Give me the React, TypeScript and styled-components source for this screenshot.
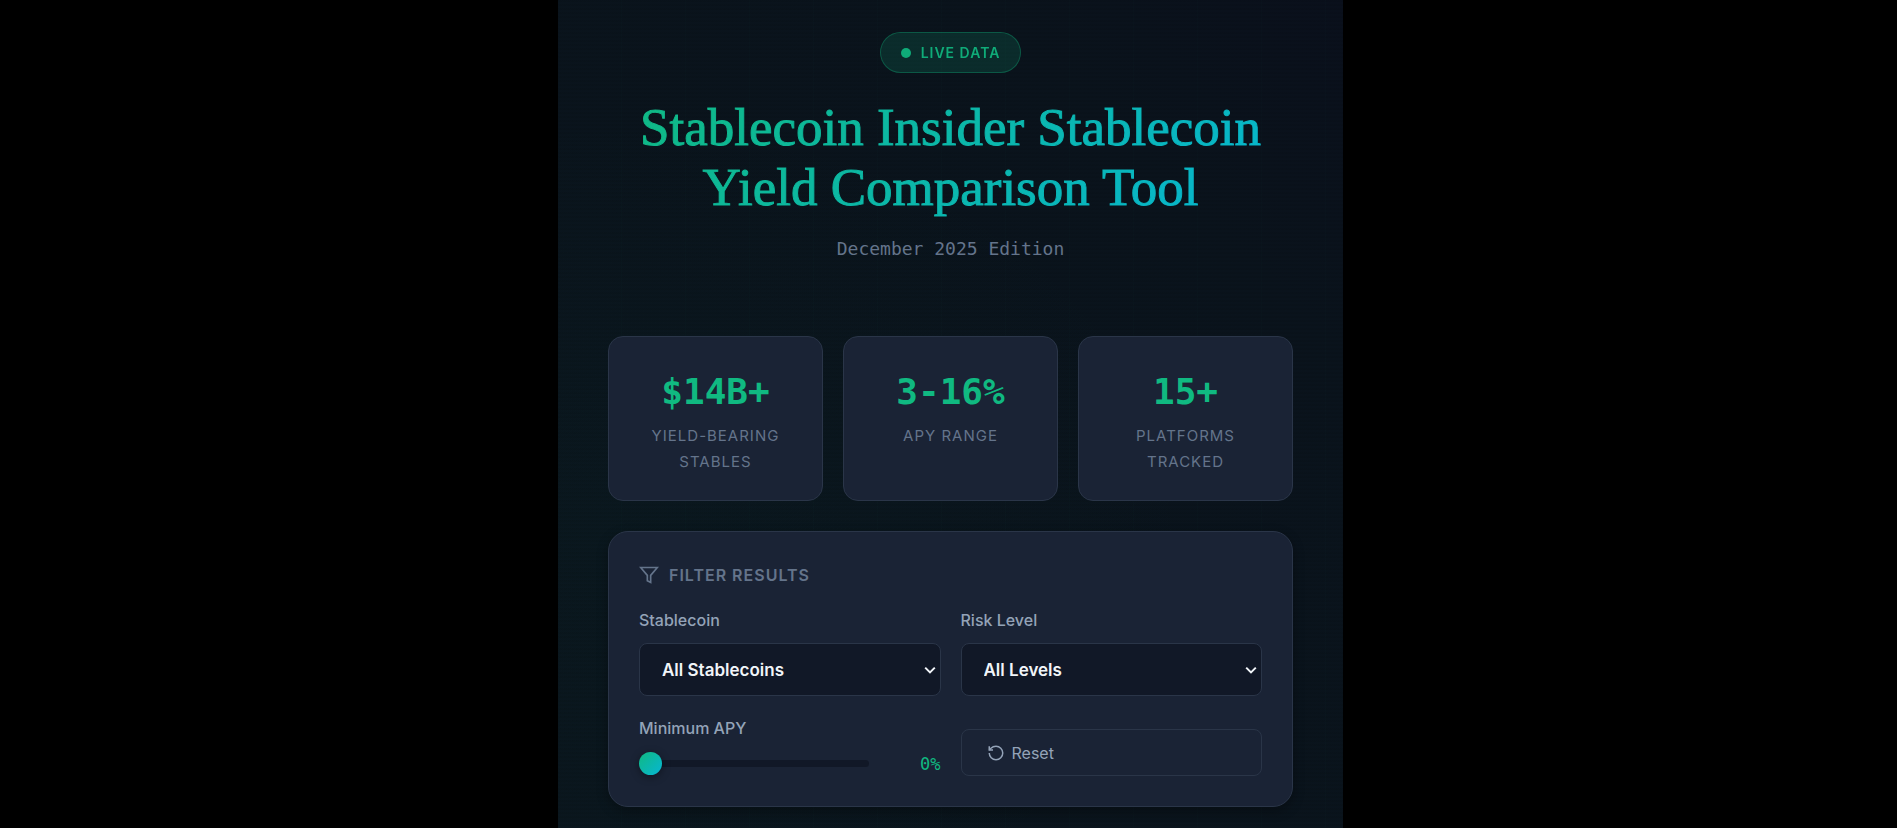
import React, { useState } from "react";
import styled, { createGlobalStyle } from "styled-components";

const sans = `Inter, "Liberation Sans", sans-serif`;
const mono = `"DejaVu Sans Mono", "Liberation Mono", monospace`;

const GlobalStyle = createGlobalStyle`
  *, *::before, *::after { box-sizing: border-box; }
  body {
    margin: 0;
    background: #000;
    font-family: ${sans};
    -webkit-font-smoothing: antialiased;
  }
`;

const Page = styled.div`
  display: flex;
  justify-content: center;
  padding-left: 4px;
  background: #000;
`;

const Panel = styled.main`
  width: 100%;
  max-width: 785px;
  min-height: 100vh;
  padding: 32px 50px 21px;
  background:
    repeating-linear-gradient(90deg, transparent 0 63px, rgba(16, 185, 129, 0.01) 63px 64px),
    repeating-linear-gradient(0deg, transparent 0 2px, rgba(0, 0, 0, 0.06) 2px 4px),
    radial-gradient(ellipse at 10% 65%, rgba(16, 185, 129, 0.02), transparent 60%),
    linear-gradient(225deg, #0a101c 0%, #0a131c 22%, #0a151d 100%);
`;

const Header = styled.header`
  display: flex;
  flex-direction: column;
  align-items: center;
  text-align: center;
  margin-bottom: 74px;
`;

const LiveBadge = styled.div`
  display: flex;
  align-items: center;
  gap: 10px;
  height: 41px;
  padding: 0 20px;
  border: 1px solid rgba(16, 185, 129, 0.35);
  border-radius: 21px;
  background: rgba(16, 185, 129, 0.17);
  color: #10b981;
  font-size: 14px;
  font-weight: 600;
  letter-spacing: 1px;
  opacity: 0.92;
`;

const LiveDot = styled.span`
  width: 10px;
  height: 10px;
  border-radius: 50%;
  background: #10b981;
`;

const Title = styled.h1`
  margin: 24px 0 0;
  width: 100%;
  background: linear-gradient(135deg, #10b981, #06b6d4);
  background-clip: text;
  -webkit-background-clip: text;
  -webkit-text-stroke: 1px transparent;
  color: transparent;
  font-family: "Liberation Serif", serif;
  font-size: 53px;
  font-weight: 400;
  line-height: 60px;
`;

const Edition = styled.p`
  margin: 19px 0 0;
  color: #64748b;
  font-family: ${mono};
  font-size: 18px;
  line-height: 26px;
`;

const StatGrid = styled.section`
  display: grid;
  grid-template-columns: repeat(3, 1fr);
  gap: 20px;
  margin-bottom: 30px;
`;

const StatCard = styled.article`
  padding: 25px;
  border: 1px solid #2a3548;
  border-radius: 15px;
  background: #1a2335;
  text-align: center;
`;

const StatValue = styled.div`
  margin-bottom: 1px;
  color: #10b981;
  font-family: ${mono};
  font-size: 36px;
  font-weight: 700;
  line-height: 60px;
`;

const StatLabel = styled.div`
  color: #64748b;
  font-size: 15px;
  letter-spacing: 1px;
  line-height: 26px;
  text-transform: uppercase;
`;

const FilterCard = styled.section`
  padding: 30px;
  border: 1px solid #2a3548;
  border-radius: 20px;
  background: #1a2335;
  box-shadow: 0 4px 12px rgba(0, 0, 0, 0.3);
`;

const FilterHeading = styled.h2`
  display: flex;
  align-items: center;
  gap: 10px;
  margin: 0 0 20px;
  color: #64748b;
  font-size: 16px;
  font-weight: 600;
  letter-spacing: 1px;
  line-height: 26px;
  text-transform: uppercase;
`;

const FilterGrid = styled.form`
  display: grid;
  grid-template-columns: 1fr 1fr;
  gap: 20px;
`;

const Field = styled.div`
  display: flex;
  flex-direction: column;
  gap: 10px;
`;

const FieldLabel = styled.label`
  color: #94a3b8;
  font-size: 16px;
  font-weight: 500;
  line-height: 25px;
`;

const SelectBox = styled.div`
  position: relative;
  color: #f1f5f9;

  svg {
    position: absolute;
    top: 20px;
    right: 4px;
    pointer-events: none;
  }
`;

const Select = styled.select`
  appearance: none;
  display: block;
  width: 100%;
  height: 53px;
  padding: 0 22px;
  border: 1px solid #2a3548;
  border-radius: 8px;
  background-color: #111827;
  color: inherit;
  font-family: ${sans};
  font-size: 17px;
  font-weight: 600;
`;

const SliderRow = styled.div`
  display: flex;
  align-items: center;
  justify-content: space-between;
  gap: 20px;
  height: 25px;
`;

const Slider = styled.input`
  appearance: none;
  flex: 0 1 230px;
  min-width: 0;
  height: 7px;
  margin: 0;
  border-radius: 4px;
  background: #111827;

  &::-webkit-slider-thumb {
    appearance: none;
    width: 23px;
    height: 23px;
    border-radius: 50%;
    background: linear-gradient(135deg, #10b981, #06b6d4);
    box-shadow: 0 2px 8px rgba(0, 0, 0, 0.4);
  }
`;

const SliderValue = styled.output`
  color: #10b981;
  font-family: ${mono};
  font-size: 17px;
`;

const ResetButton = styled.button`
  display: flex;
  align-items: center;
  align-self: end;
  gap: 7px;
  height: 47px;
  padding: 0 25px;
  border: 1px solid #2a3548;
  border-radius: 8px;
  background: transparent;
  color: #94a3b8;
  font-family: ${sans};
  font-size: 16px;
`;

const FunnelIcon = () => (
  <svg width="20" height="20" viewBox="0 0 24 24" fill="none" stroke="currentColor" strokeWidth="2" aria-hidden="true">
    <polygon points="22 3 2 3 10 12.46 10 19 14 21 14 12.46 22 3" />
  </svg>
);

const ResetIcon = () => (
  <svg width="18" height="18" viewBox="0 0 24 24" fill="none" stroke="currentColor" strokeWidth="2" aria-hidden="true">
    <path d="M3 12a9 9 0 1 0 9-9 9.75 9.75 0 0 0-6.74 2.74L3 8" />
    <path d="M3 3v5h5" />
  </svg>
);

const ChevronIcon = () => (
  <svg width="14" height="14" viewBox="0 0 14 14" fill="none" stroke="currentColor" strokeWidth="2" aria-hidden="true">
    <path d="M2.2 4.6 7 9.4l4.8-4.8" />
  </svg>
);

const stats = [
  { value: "$14B+", label: "Yield-Bearing Stables" },
  { value: "3-16%", label: "APY Range" },
  { value: "15+", label: "Platforms Tracked" },
];

export default function App() {
  const [coin, setCoin] = useState("all");
  const [risk, setRisk] = useState("all");
  const [minApy, setMinApy] = useState(0);

  const reset = () => {
    setCoin("all");
    setRisk("all");
    setMinApy(0);
  };

  return (
    <Page>
      <GlobalStyle />
      <Panel>
        <Header>
          <LiveBadge>
            <LiveDot />
            LIVE DATA
          </LiveBadge>
          <Title>Stablecoin Insider Stablecoin Yield Comparison Tool</Title>
          <Edition>December 2025 Edition</Edition>
        </Header>

        <StatGrid>
          {stats.map((stat) => (
            <StatCard key={stat.label}>
              <StatValue>{stat.value}</StatValue>
              <StatLabel>{stat.label}</StatLabel>
            </StatCard>
          ))}
        </StatGrid>

        <FilterCard>
          <FilterHeading>
            <FunnelIcon />
            Filter Results
          </FilterHeading>
          <FilterGrid onSubmit={(event) => event.preventDefault()}>
            <Field>
              <FieldLabel htmlFor="coin">Stablecoin</FieldLabel>
              <SelectBox>
                <Select id="coin" value={coin} onChange={(event) => setCoin(event.target.value)}>
                  <option value="all">All Stablecoins</option>
                </Select>
                <ChevronIcon />
              </SelectBox>
            </Field>
            <Field>
              <FieldLabel htmlFor="risk">Risk Level</FieldLabel>
              <SelectBox>
                <Select id="risk" value={risk} onChange={(event) => setRisk(event.target.value)}>
                  <option value="all">All Levels</option>
                </Select>
                <ChevronIcon />
              </SelectBox>
            </Field>
            <Field>
              <FieldLabel htmlFor="apy">Minimum APY</FieldLabel>
              <SliderRow>
                <Slider
                  id="apy"
                  type="range"
                  min={0}
                  max={20}
                  value={minApy}
                  onChange={(event) => setMinApy(Number(event.target.value))}
                />
                <SliderValue htmlFor="apy">{minApy}%</SliderValue>
              </SliderRow>
            </Field>
            <ResetButton type="button" onClick={reset}>
              <ResetIcon />
              Reset
            </ResetButton>
          </FilterGrid>
        </FilterCard>
      </Panel>
    </Page>
  );
}
